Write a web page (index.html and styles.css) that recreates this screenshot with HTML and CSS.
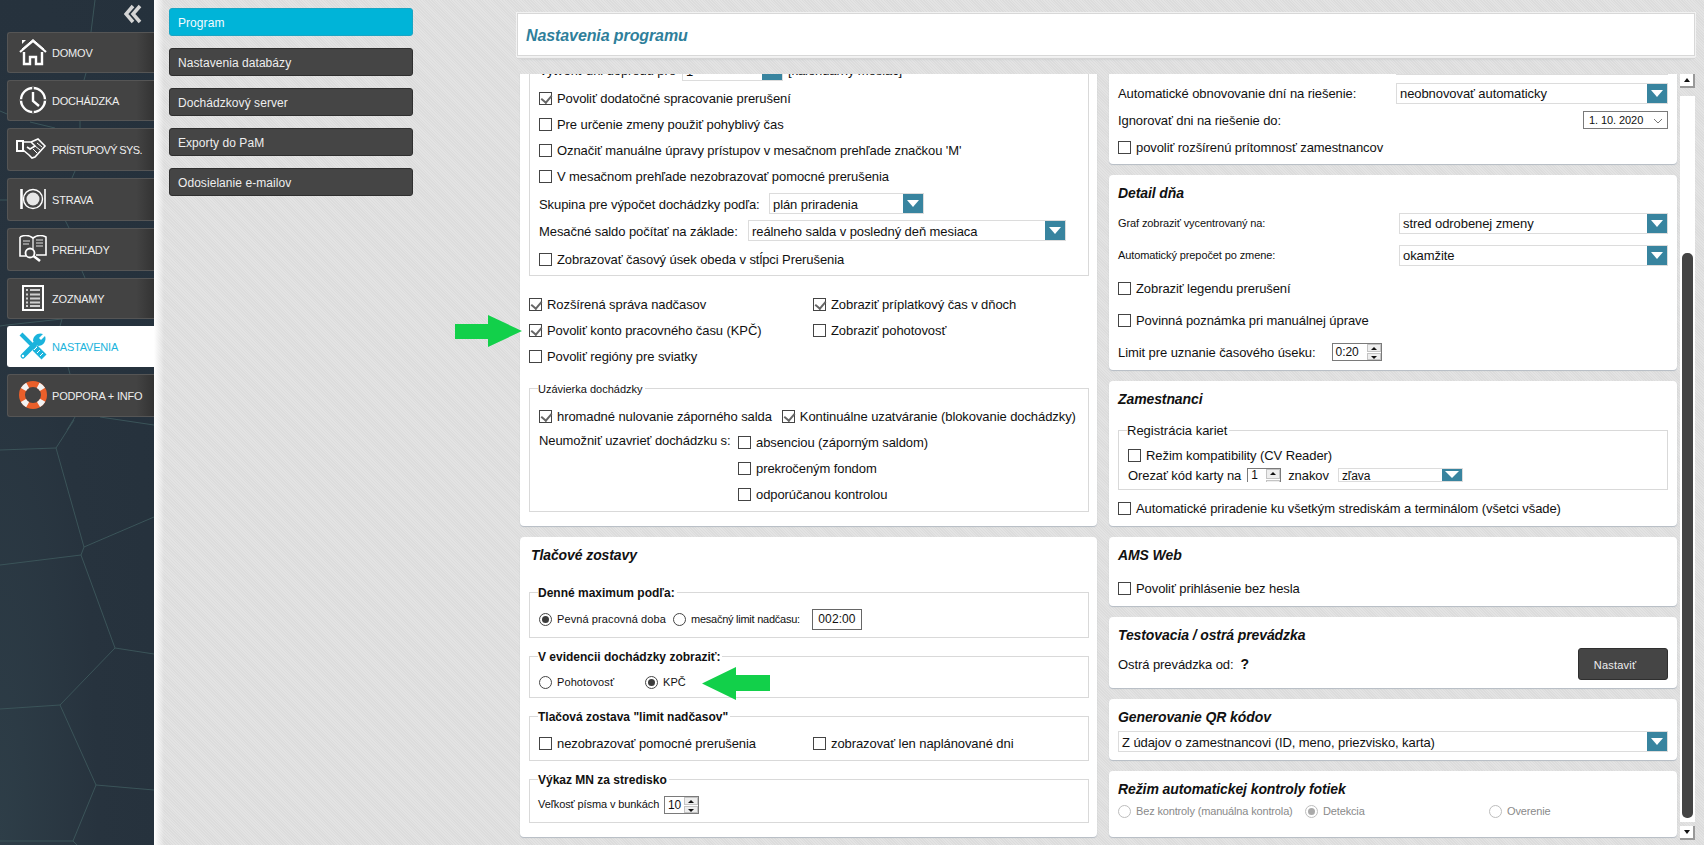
FILE: index.html
```html
<!DOCTYPE html>
<html lang="sk">
<head>
<meta charset="utf-8">
<title>Nastavenia programu</title>
<link rel="stylesheet" href="styles.css">
</head>
<body>
<aside class="sidebar">
  <svg class="mesh" width="154" height="845" viewBox="0 0 154 845" fill="none" stroke="#3b5459" stroke-width="1">
    <path d="M95 0L91 32M86 73L84 80M80 121L80 128M0 111L7 114M30 122L55 128M75 171L72 178M0 200L7 200M65 220L69 228M82 271L85 278M0 326L7 325L62 319L60 326M68 367L70 374M75 417L67 430M100 417L154 425"/>
    <path d="M0 450L56 448L74 420M56 448L84 547L154 517M84 547L81 555L0 565M81 555L115 648L154 654M115 648L60 705L0 709M60 705L96 785L154 790M96 785L73 841L0 841M73 841L77 845"/>
  </svg>
  <div class="collapse">
    <svg width="18" height="20" viewBox="0 0 18 20" fill="none" stroke="#d5d5d5" stroke-width="3.5"><path d="M9 2L2 10L9 18M16 2L9 10L16 18"/></svg>
  </div>
  <nav class="nav">
    <a class="nav-item">
      <svg class="nav-icon" width="28" height="28" viewBox="0 0 28 28" fill="none" stroke="#fff"><path d="M3 2H7L3 6Z" fill="#fff" stroke="none"/><path d="M1 14L14 3L27 14" stroke-width="2.2"/><path d="M5 14V26H11V19H17V26H23V14" stroke-width="2.4"/><path d="M3 11L14 1.500L25 11" stroke-width="1"/></svg>
      <span>DOMOV</span>
    </a>
    <a class="nav-item">
      <svg class="nav-icon" width="28" height="28" viewBox="0 0 28 28" fill="none" stroke="#fff"><circle cx="14" cy="14" r="12" stroke-width="2.4"/><path d="M14 6V15L20 20" stroke-width="2.4"/><path d="M14 1V4M14 24V27M1 14H4M24 14H27" stroke="#444" stroke-width="1.500"/></svg>
      <span>DOCHÁDZKA</span>
    </a>
    <a class="nav-item nav-tall nav-narrow">
      <svg class="nav-icon nav-icon-wide" width="31" height="22" viewBox="0 0 31 22" fill="none" stroke="#fff" stroke-width="1.500"><path d="M1 3H7V13H1Z" stroke-width="2"/><path d="M7 4H15L19 8L14 11L11 9M7 12L13 17L16 20L19 19L29 8L22 1L15 4" stroke-width="1.600"/><path d="M21 5L26 9M19 8L24 12M17 11L21 15" stroke-width="1"/></svg>
      <span>PRÍSTUPOVÝ SYS.</span>
    </a>
    <a class="nav-item nav-tall">
      <svg class="nav-icon" width="28" height="22" viewBox="0 0 28 22" fill="none" stroke="#fff"><path d="M2.500 1V21" stroke-width="2.600"/><circle cx="14" cy="11" r="9.500" stroke-width="1.400"/><circle cx="14" cy="11" r="6.500" fill="#e6e6e6" stroke="none"/><path d="M26 1V21" stroke-width="1.600"/></svg>
      <span>STRAVA</span>
    </a>
    <a class="nav-item nav-tall">
      <svg class="nav-icon" width="28" height="28" viewBox="0 0 28 28" fill="none" stroke="#fff"><path d="M1 2C5 0 10 0 14 3C18 0 23 0 27 2V20H17M1 2V21H7" stroke-width="1.600"/><path d="M14 3V14" stroke-width="1.200"/><path d="M4 6H11M4 9H10M17 5H24M17 8H24M17 11H24" stroke="#aaa" stroke-width="1.500"/><circle cx="11" cy="18" r="4.500" stroke-width="1.800"/><path d="M14.500 21L21 26" stroke-width="2.600"/></svg>
      <span>PREHĽADY</span>
    </a>
    <a class="nav-item">
      <svg class="nav-icon nav-icon-list" width="22" height="26" viewBox="0 0 22 26" fill="none"><rect x="1" y="1" width="20" height="24" fill="#4a4a4a" stroke="#fff" stroke-width="2"/><path d="M4 5H6M8 5H18M4 9.500H6M8 9.500H18M4 13.500H6M8 13.500H18M4 17.500H6M8 17.500H18M4 21H6M8 21H18" stroke="#cfcfcf" stroke-width="2"/></svg>
      <span>ZOZNAMY</span>
    </a>
    <a class="nav-item is-active">
      <svg class="nav-icon" width="28" height="28" viewBox="0 0 28 28" fill="none" stroke="#1ab3dc"><path d="M2 2L16 16" stroke-width="4"/><path d="M16 16L25 25" stroke-width="7"/><path d="M18 15L15 18M21 18L18 21M24 21L21 24" stroke="#fff" stroke-width="1"/><path d="M4 24L18 10" stroke-width="5" stroke-linecap="round"/><path d="M14 9C14 4 19 0 24 2L20 6L22 8L26 4C28 9 24 14 19 14" fill="#1ab3dc" stroke="none"/><circle cx="4" cy="24" r="1.200" fill="#fff" stroke="none"/></svg>
      <span>NASTAVENIA</span>
    </a>
    <a class="nav-item nav-tall">
      <svg class="nav-icon" width="28" height="28" viewBox="0 0 28 28" fill="none"><circle cx="14" cy="14" r="11" stroke="#ea5f2a" stroke-width="6"/><circle cx="14" cy="14" r="11" stroke="#f2f2f2" stroke-width="6" stroke-dasharray="6 11.280" transform="rotate(-62 14 14)"/></svg>
      <span>PODPORA + INFO</span>
    </a>
  </nav>
</aside>

<aside class="submenu">
  <a class="sub-item is-active">Program</a>
  <a class="sub-item">Nastavenia databázy</a>
  <a class="sub-item">Dochádzkový server</a>
  <a class="sub-item">Exporty do PaM</a>
  <a class="sub-item">Odosielanie e-mailov</a>
</aside>

<main class="main">
  <header class="titlebar"><h1>Nastavenia programu</h1></header>
  <div class="scroller">
    <div class="col col-left">
      <section class="panel panel-attendance">
        <div class="group group-top">
          <div class="row row-first"><span class="label-day">Vytvoriť dni dopredu pre</span><div class="select select-day"><span>1</span><i class="arrow"></i></div><span>[kalendárny mesiac]</span></div>
          <label class="row"><input type="checkbox" class="cb" checked>Povoliť dodatočné spracovanie prerušení</label>
          <label class="row"><input type="checkbox" class="cb">Pre určenie zmeny použiť pohyblivý čas</label>
          <label class="row"><input type="checkbox" class="cb">Označiť manuálne úpravy prístupov v mesačnom prehľade značkou 'M'</label>
          <label class="row"><input type="checkbox" class="cb">V mesačnom prehľade nezobrazovať pomocné prerušenia</label>
          <div class="row"><span class="label-group">Skupina pre výpočet dochádzky podľa:</span><div class="select select-group"><span>plán priradenia</span><i class="arrow"></i></div></div>
          <div class="row"><span class="label-saldo">Mesačné saldo počítať na základe:</span><div class="select select-saldo"><span>reálneho salda v posledný deň mesiaca</span><i class="arrow"></i></div></div>
          <label class="row"><input type="checkbox" class="cb">Zobrazovať časový úsek obeda v stĺpci Prerušenia</label>
        </div>
        <div class="two-col">
          <label class="row"><input type="checkbox" class="cb" checked>Rozšírená správa nadčasov</label>
          <label class="row"><input type="checkbox" class="cb" checked>Zobraziť príplatkový čas v dňoch</label>
          <label class="row"><input type="checkbox" class="cb" checked>Povoliť konto pracovného času (KPČ)</label>
          <label class="row"><input type="checkbox" class="cb">Zobraziť pohotovosť</label>
          <label class="row"><input type="checkbox" class="cb">Povoliť regióny pre sviatky</label>
        </div>
        <div class="group group-closing">
          <span class="legend legend-small">Uzávierka dochádzky</span>
          <div class="row closing-first">
            <label class="inline"><input type="checkbox" class="cb" checked>hromadné nulovanie záporného salda</label>
            <label class="inline"><input type="checkbox" class="cb" checked>Kontinuálne uzatváranie (blokovanie dochádzky)</label>
          </div>
          <div class="closing-grid">
            <span class="closing-label">Neumožniť uzavrieť dochádzku s:</span>
            <label class="row"><input type="checkbox" class="cb">absenciou (záporným saldom)</label>
            <label class="row"><input type="checkbox" class="cb">prekročeným fondom</label>
            <label class="row"><input type="checkbox" class="cb">odporúčanou kontrolou</label>
          </div>
        </div>
      </section>

      <section class="panel panel-print">
        <h2 class="panel-title">Tlačové zostavy</h2>
        <div class="group group-daily">
          <span class="legend">Denné maximum podľa:</span>
          <div class="row small-row">
            <label class="inline small"><input type="radio" name="daily" class="rb" checked>Pevná pracovná doba</label>
            <label class="inline small tight"><input type="radio" name="daily" class="rb">mesačný limit nadčasu:</label>
            <div class="time-box">002:00</div>
          </div>
        </div>
        <div class="group group-show">
          <span class="legend">V evidencii dochádzky zobraziť:</span>
          <div class="row show-row">
            <label class="inline small"><input type="radio" name="show" class="rb">Pohotovosť</label>
            <label class="inline small"><input type="radio" name="show" class="rb" checked>KPČ</label>
          </div>
        </div>
        <div class="group group-limit">
          <span class="legend">Tlačová zostava "limit nadčasov"</span>
          <div class="limit-grid">
            <label class="row"><input type="checkbox" class="cb">nezobrazovať pomocné prerušenia</label>
            <label class="row"><input type="checkbox" class="cb">zobrazovať len naplánované dni</label>
          </div>
        </div>
        <div class="group group-report">
          <span class="legend">Výkaz MN za stredisko</span>
          <div class="row report-row">
            <span class="small report-label">Veľkosť písma v bunkách</span>
            <div class="spinner spinner-font"><span>10</span><i class="spin"><b class="up"></b><b class="down"></b></i></div>
          </div>
        </div>
      </section>
    </div>

    <div class="col col-right">
      <section class="panel grid-panel p-renew">
        <div class="row-between"><span></span><div class="select select-right"><span></span><i class="arrow"></i></div></div>
        <div class="row-between"><span>Automatické obnovovanie dní na riešenie:</span><div class="select select-renew"><span>neobnovovať automaticky</span><i class="arrow"></i></div></div>
        <div class="row-between"><span>Ignorovať dni na riešenie do:</span><div class="date-box"><span>1. 10. 2020</span><svg width="10" height="6" viewBox="0 0 10 6" fill="none" stroke="#777"><path d="M1 1L5 5L9 1"/></svg></div></div>
        <label class="row"><input type="checkbox" class="cb">povoliť rozšírenú prítomnosť zamestnancov</label>
      </section>

      <section class="panel grid-panel p-detail">
        <h2 class="panel-title">Detail dňa</h2>
        <div class="row-between"><span class="small">Graf zobraziť vycentrovaný na:</span><div class="select select-detail"><span>stred odrobenej zmeny</span><i class="arrow"></i></div></div>
        <div class="row-between"><span class="small">Automatický prepočet po zmene:</span><div class="select select-detail"><span>okamžite</span><i class="arrow"></i></div></div>
        <label class="row"><input type="checkbox" class="cb">Zobraziť legendu prerušení</label>
        <label class="row"><input type="checkbox" class="cb">Povinná poznámka pri manuálnej úprave</label>
        <div class="row limit-row"><span>Limit pre uznanie časového úseku:</span><div class="spinner spinner-limit"><span>0:20</span><i class="spin"><b class="up"></b><b class="down"></b></i></div></div>
      </section>

      <section class="panel grid-panel p-staff">
        <h2 class="panel-title">Zamestnanci</h2>
        <div class="group group-cards">
          <span class="legend legend-normal">Registrácia kariet</span>
          <label class="row card-row"><input type="checkbox" class="cb">Režim kompatibility (CV Reader)</label>
          <div class="row card-row">
            <span>Orezať kód karty na</span>
            <div class="spinner spinner-card"><span>1</span><i class="spin"><b class="up"></b><b class="down"></b></i></div>
            <span class="znakov">znakov</span>
            <div class="select select-trim"><span>zľava</span><i class="arrow"></i></div>
          </div>
        </div>
        <label class="row"><input type="checkbox" class="cb">Automatické priradenie ku všetkým strediskám a terminálom (všetci všade)</label>
      </section>

      <section class="panel grid-panel p-ams">
        <h2 class="panel-title">AMS Web</h2>
        <label class="row"><input type="checkbox" class="cb">Povoliť prihlásenie bez hesla</label>
      </section>

      <section class="panel grid-panel p-test">
        <h2 class="panel-title">Testovacia / ostrá prevádzka</h2>
        <div class="row-between"><span>Ostrá prevádzka od:&nbsp; <b class="q">?</b></span><button class="btn" type="button">Nastaviť</button></div>
      </section>

      <section class="panel grid-panel p-qr">
        <h2 class="panel-title">Generovanie QR kódov</h2>
        <div class="select select-qr"><span>Z údajov o zamestnancovi (ID, meno, priezvisko, karta)</span><i class="arrow"></i></div>
      </section>

      <section class="panel grid-panel p-photo">
        <h2 class="panel-title">Režim automatickej kontroly fotiek</h2>
        <div class="photo-row">
          <label class="inline small"><input type="radio" name="photo" class="rb" disabled>Bez kontroly (manuálna kontrola)</label>
          <label class="inline small"><input type="radio" name="photo" class="rb" checked disabled>Detekcia</label>
          <label class="inline small"><input type="radio" name="photo" class="rb" disabled>Overenie</label>
        </div>
      </section>
    </div>

    <div class="scrollbar">
      <div class="sb-btn"><i class="tri-up"></i></div>
      <div class="sb-track"><div class="sb-thumb"></div></div>
      <div class="sb-btn"><i class="tri-down"></i></div>
    </div>
  </div>
</main>

<svg class="green-arrow arrow-right" width="67" height="32" viewBox="0 0 67 32"><path d="M0 9H33V0L67 16L33 32V24H0Z" fill="#12d04a"/></svg>
<svg class="green-arrow arrow-left" width="68" height="33" viewBox="0 0 68 33"><path d="M68 8H34V0L0 16.500L34 33V24H68Z" fill="#12d04a"/></svg>
</body>
</html>
```

FILE: styles.css
```css
* { box-sizing: border-box; }
html, body { height: 100%; margin: 0; }
body {
  display: flex;
  position: relative;
  overflow: hidden;
  font: 13px/1.2 "Liberation Sans", Arial, sans-serif;
  letter-spacing: -0.08px;
  color: #111;
  background: repeating-linear-gradient(45deg, #dcdcdc 0, #dcdcdc 1px, #e3e3e3 1px, #e3e3e3 2px);
}

/* Sidebar */
.sidebar {
  position: relative;
  flex: 0 0 154px;
  background: radial-gradient(ellipse at 0% 100%, #2e3e48 0, #27333e 45%, #25313c 100%);
}
.mesh { position: absolute; left: 0; top: 0; }
.collapse {
  position: relative;
  height: 32px;
  padding: 4px 12px 0 0;
  display: flex;
  justify-content: flex-end;
  align-items: flex-start;
}
.nav { position: relative; display: flex; flex-direction: column; gap: 7px; padding-left: 7px; }
.nav-item {
  display: flex;
  align-items: center;
  gap: 5px;
  height: 41px;
  padding-left: 11px;
  background: linear-gradient(90deg, #434343 0, #434343 88%, #333 100%);
  border: 1px solid #555;
  border-right: 0;
  border-radius: 3px 0 0 3px;
  color: #eee;
  font-size: 11px;
  letter-spacing: -0.2px;
  white-space: nowrap;
}
.nav-narrow { letter-spacing: -0.6px; }
.nav-item span { margin-top: 2px; }
.nav-tall { height: 43px; }
.nav-icon { flex: 0 0 auto; margin-top: -2px; }
.nav-icon-wide { margin-left: -3px; }
.nav-icon-list { margin-left: 3px; margin-right: 3px; }
.nav-item.is-active { background: #fff; border-color: #fff; color: #1ab3dc; }

/* Sub menu */
.submenu {
  flex: 0 0 363px;
  padding: 8px 104px 0 15px;
  display: flex;
  flex-direction: column;
  gap: 12px;
  background: linear-gradient(90deg, #fff 0, rgba(255,255,255,0) 10px);
}
.sub-item {
  display: flex;
  align-items: center;
  height: 28px;
  padding: 2px 0 0 8px;
  background: #454545;
  border: 1px solid #2f2f2f;
  border-radius: 3px;
  color: #eee;
  font-size: 12px;
  letter-spacing: 0.06px;
}
.sub-item.is-active { background: #00b4d8; border-color: #19a5c4; color: #f4fbff; }

/* Main */
.main { flex: 0 0 1178px; display: flex; flex-direction: column; height: 845px; }
.titlebar {
  margin-top: 13px;
  height: 43px;
  background: #fff;
  border: 1px solid #d8d8d8;
  outline: 1px solid #f2f2f2;
  box-shadow: 0 2px 0 #efefef, 0 3px 0 #d5d5d5, 0 6px 3px -4px #a4a8ae;
  display: flex;
  align-items: center;
  padding: 2px 0 0 8px;
}
.titlebar h1 { margin: 0; font-size: 16px; letter-spacing: -0.1px; font-style: italic; font-weight: bold; color: #2f7f9b; }
.scroller { margin-top: 18px; flex: 1 1 auto; display: flex; overflow: hidden; align-items: flex-start; }
.col { margin-top: -24px; display: flex; flex-direction: column; }
.col-left { width: 577px; margin-left: 3px; gap: 11px; }
.col-right { width: 568px; margin-left: 12px; gap: 11px; }

.panel {
  background: #fff;
  border-radius: 4px;
  box-shadow: 0 1px 1px #b5bcc4;
  padding: 0 9px;
}
.panel-title {
  margin: 0;
  padding-top: 1px;
  font-size: 14px;
  letter-spacing: -0.1px;
  font-style: italic;
  font-weight: bold;
  color: #111;
  align-self: center;
  justify-self: start;
}

/* Rows and groups */
.row { display: flex; align-items: center; gap: 5px; padding-top: 2px; white-space: nowrap; }
.inline { display: inline-flex; align-items: center; gap: 5px; white-space: nowrap; }
.small { font-size: 11px; letter-spacing: 0.1px; }
.tight { letter-spacing: -0.25px; }
.row-between { display: flex; align-items: center; justify-content: space-between; padding-top: 2px; white-space: nowrap; }
.group { position: relative; border: 1px solid #d9d9d9; }
.legend {
  position: absolute;
  left: 8px;
  top: -7px;
  padding-right: 2px;
  background: #fff;
  font-size: 12px;
  letter-spacing: 0;
  line-height: 14px;
  font-weight: bold;
}
.legend-small { font-size: 11px; font-weight: normal; }
.legend-normal { font-size: 13px; font-weight: normal; }

/* Form controls */
.cb, .rb {
  appearance: none;
  flex: 0 0 13px;
  width: 13px;
  height: 13px;
  margin: -1px 0 0;
  position: relative;
  background: #fff;
  border: 1px solid #444;
}
.cb:checked::after {
  content: "";
  position: absolute;
  left: 3px;
  top: 0;
  width: 5px;
  height: 8px;
  border: solid #666;
  border-width: 0 2px 2px 0;
  transform: rotate(40deg);
}
.rb { border-radius: 50%; }
.rb:checked::after {
  content: "";
  position: absolute;
  left: 2px;
  top: 2px;
  width: 7px;
  height: 7px;
  border-radius: 50%;
  background: #3c3c3c;
}
.rb:disabled { border-color: #bdbdbd; }
.rb:disabled:checked::after { background: #aaa; }
.p-photo .small { color: #8a8a8a; letter-spacing: -0.15px; }
.p-detail .small { letter-spacing: -0.1px; }

.select {
  display: flex;
  align-items: center;
  justify-content: space-between;
  height: 21px;
  margin-top: -2px;
  padding-left: 3px;
  border: 1px solid #dcdcdc;
  background: #fff;
  flex: 0 0 auto;
}
.select > span { margin-top: 2px; }
.arrow {
  position: relative;
  flex: 0 0 20px;
  height: 19px;
  background: #38849f;
}
.arrow::after {
  content: "";
  position: absolute;
  left: 4px;
  top: 6px;
  border: solid transparent;
  border-width: 7px 6px 0;
  border-top-color: #fff;
}
.label-day { flex: 0 0 138px; }
.label-group { flex: 0 0 225px; }
.label-saldo { flex: 0 0 204px; }
.select-day { width: 101px; }
.select-group { width: 155px; }
.select-saldo { width: 318px; }
.select-right { width: 272px; }
.select-renew { width: 272px; }
.select-detail { width: 269px; }
.select-qr { width: 100%; margin-top: 0; align-self: end; }
.select-trim { width: 125px; height: 14px; font-size: 12px; margin-left: 4px; }
.select-trim .arrow { height: 12px; }
.select-trim .arrow::after { top: 2px; border-width: 7px 7px 0; left: 3px; }

.time-box {
  width: 50px;
  height: 21px;
  margin-top: -2px;
  display: flex;
  align-items: center;
  justify-content: center;
  border: 1px solid #666;
  font-size: 12px;
  letter-spacing: 0.1px;
}
.date-box {
  width: 85px;
  height: 18px;
  margin-top: -2px;
  padding: 1px 4px 0 5px;
  display: flex;
  align-items: center;
  justify-content: space-between;
  border: 1px solid #7a7a7a;
  font-size: 11px;
}
.spinner {
  height: 18px;
  margin-top: -2px;
  display: flex;
  align-items: center;
  justify-content: space-between;
  padding-left: 3px;
  border: 1px solid #7a7a7a;
  font-size: 12px;
}
.spin { flex: 0 0 14px; display: flex; flex-direction: column; align-self: stretch; gap: 1px; background: #fff; }
.spin b { position: relative; flex: 1; background: #eee; border: 1px solid #c4c4c4; }
.spin b::after {
  content: "";
  position: absolute;
  left: 3px;
  top: 2px;
  border: solid transparent;
  border-width: 0 3px 3px;
  border-bottom-color: #111;
}
.spin .down::after { border-width: 3px 3px 0; border-top-color: #111; border-bottom-color: transparent; }
.spinner-font { width: 35px; }
.report-label { flex: 0 0 126px; letter-spacing: -0.1px; }
.spinner-limit { width: 50px; margin-left: 11px; }
.spinner-card { width: 34px; margin: 1px 0 0 1px; height: 14px; align-self: flex-start; overflow: hidden; border-bottom: 0; }
.spinner-card .spin { height: 20px; }
.znakov { margin-left: 2px; }

/* Left panels */
.panel-attendance { padding: 2px 8px 14px 9px; }
.group-top {
  padding: 7px 0 1px 9px;
  display: grid;
  grid-template-rows: 25px 26px 26px 26px 26px 29px 25px 31px;
  height: 224px;
}
.row-first { align-items: flex-start; padding-top: 0; }
.row-first .select { margin-top: 0; }
.row-first > span { margin-top: 3px; }
.two-col { display: grid; grid-template-columns: 284px 1fr; grid-auto-rows: 26px; margin-top: 15px; }
.group-closing { margin-top: 19px; height: 124px; padding: 14px 4px 0 9px; }
.closing-first { height: 26px; gap: 10px; }
.closing-grid { display: grid; grid-template-columns: 199px 1fr; grid-auto-rows: 26px; }
.closing-label { align-self: center; margin-top: -2px; white-space: nowrap; }
.closing-grid .row { grid-column: 2; }
.closing-grid .closing-label { grid-row: 1; }
.closing-grid .row:nth-child(2) { grid-row: 1; }

.panel-print { padding: 4px 8px 14px 9px; height: 300px; }
.panel-print .panel-title { height: 27px; display: flex; align-items: center; padding-left: 2px; }
.group-daily { margin-top: 24px; height: 46px; padding: 15px 0 0 9px; }
.small-row { height: 22px; display: grid; grid-template-columns: 134px 139px auto; gap: 0; justify-content: start; }
.group-show { margin-top: 18px; height: 42px; padding: 15px 0 0 9px; }
.show-row { height: 20px; gap: 0; }
.show-row .inline:first-child { width: 106px; }
.group-limit { margin-top: 18px; height: 45px; padding: 13px 0 0 9px; }
.limit-grid { display: grid; grid-template-columns: 274px 1fr; grid-auto-rows: 26px; }
.group-report { margin-top: 18px; height: 44px; padding: 16px 0 0 8px; }
.report-row { height: 18px; gap: 0; padding-top: 0; }
.report-row .spinner { margin-top: 0; }

/* Right panels */
.grid-panel { display: grid; padding-top: 4px; grid-template-columns: 1fr; align-items: center; }
.p-renew { grid-template-rows: 21px 36px 18px 35px; }
.p-renew .row-between:first-child { padding-top: 0; }
.p-renew .select-right { border-top: 0; margin-top: 0; }
.p-detail { grid-template-rows: 27px 34px 30px 36px 28px 36px; }
.p-staff { grid-template-rows: 27px 78px 36px; }
.group-cards { margin-top: 18px; height: 60px; padding: 14px 0 0 9px; }
.card-row { height: 20px; }
.p-ams { grid-template-rows: 28px 37px; }
.p-test { grid-template-rows: 27px 32px; padding-bottom: 8px; }
.p-test .row-between { padding-top: 0; }
.p-qr { grid-template-rows: 27px 22px; padding-bottom: 8px; }
.p-photo { grid-template-rows: 27px 18px; padding-bottom: 17px; }
.btn {
  width: 90px;
  height: 32px;
  padding: 2px 16px 0 0;
  background: #454545;
  border: 1px solid #2f2f2f;
  border-radius: 3px;
  color: #eee;
  font: 11px "Liberation Sans", Arial, sans-serif;
  letter-spacing: 0.2px;
}
.q { font-size: 14px; }
.photo-row { display: grid; grid-template-columns: 187px 184px 1fr; padding-top: 2px; }

/* Scrollbar */
.scrollbar { width: 15px; margin-left: 3px; display: flex; flex-direction: column; gap: 0; }
.sb-btn {
  position: relative;
  height: 14px;
  background: #fff;
  border-right: 2px solid #999;
  border-bottom: 2px solid #999;
  display: flex;
  align-items: center;
  justify-content: center;
}
.tri-up { border: solid transparent; border-width: 0 3px 4px; border-bottom-color: #111; }
.tri-down { border: solid transparent; border-width: 4px 3px 0; border-top-color: #111; }
.sb-track { height: 726px; margin: 8px 0 4px; background: #fff; padding: 157px 2px 0 2px; }
.sb-thumb { height: 565px; background: #444; border-radius: 5px; }

/* Annotation arrows */
.green-arrow { position: absolute; }
.arrow-right { left: 455px; top: 315px; }
.arrow-left { left: 702px; top: 667px; }
```
